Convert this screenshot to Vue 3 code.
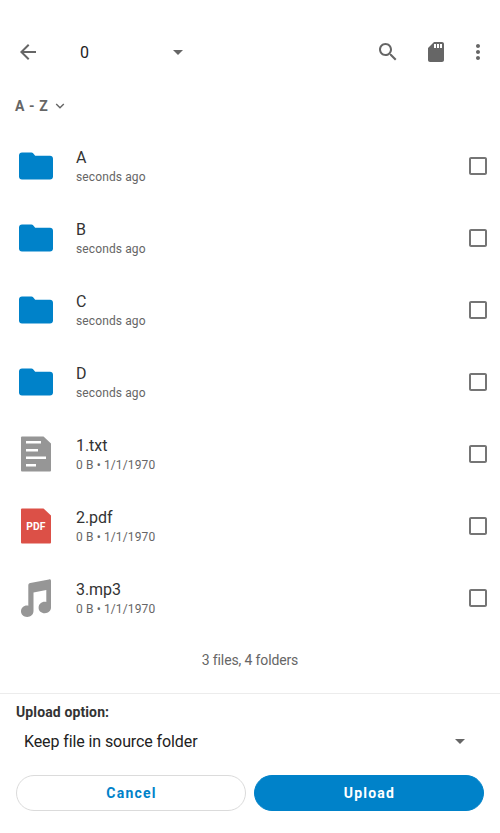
<script setup>
const items = [
  { name: 'A', meta: 'seconds ago', kind: 'folder' },
  { name: 'B', meta: 'seconds ago', kind: 'folder' },
  { name: 'C', meta: 'seconds ago', kind: 'folder' },
  { name: 'D', meta: 'seconds ago', kind: 'folder' },
  { name: '1.txt', meta: '0 B • 1/1/1970', kind: 'text' },
  { name: '2.pdf', meta: '0 B • 1/1/1970', kind: 'pdf' },
  { name: '3.mp3', meta: '0 B • 1/1/1970', kind: 'audio' },
]
</script>

<template>
  <div class="screen">
    <header class="toolbar">
      <svg class="icon" viewBox="0 0 24 24"><path d="M20 11H7.83l5.59-5.59L12 4l-8 8 8 8 1.41-1.41L7.83 13H20v-2z" /></svg>
      <div class="account">
        <span>0</span>
        <svg class="icon" viewBox="0 0 24 24"><path d="M7 10l5 5 5-5z" /></svg>
      </div>
      <div class="actions">
        <svg class="icon" viewBox="0 0 24 24"><path d="M15.5 14h-.79l-.28-.27C15.41 12.59 16 11.11 16 9.5 16 5.91 13.09 3 9.5 3S3 5.91 3 9.5 5.91 16 9.5 16c1.61 0 3.09-.59 4.23-1.57l.27.28v.79l5 4.99L20.49 19l-4.99-5zm-6 0C7.01 14 5 11.99 5 9.5S7.01 5 9.5 5 14 7.01 14 9.5 11.99 14 9.5 14z" /></svg>
        <svg class="icon" viewBox="0 0 24 24"><path d="M18 2h-8L4.02 8 4 20c0 1.1.9 2 2 2h12c1.1 0 2-.9 2-2V4c0-1.1-.9-2-2-2zm-6 6h-2V4h2v4zm3 0h-2V4h2v4zm3 0h-2V4h2v4z" /></svg>
        <svg class="icon more" viewBox="0 0 24 24"><path d="M12 8c1.1 0 2-.9 2-2s-.9-2-2-2-2 .9-2 2 .9 2 2 2zm0 2c-1.1 0-2 .9-2 2s.9 2 2 2 2-.9 2-2-.9-2-2-2zm0 6c-1.1 0-2 .9-2 2s.9 2 2 2 2-.9 2-2-.9-2-2-2z" /></svg>
      </div>
    </header>

    <div class="sort">
      <span>A - Z</span>
      <svg class="chevron" viewBox="0 0 10 6"><path d="M1.2 1L5 4.8 8.8 1" /></svg>
    </div>

    <main class="list">
      <div v-for="item in items" :key="item.name" class="row">
        <svg class="thumb" viewBox="0 0 40 40">
          <path v-if="item.kind === 'folder'" class="blue" d="M6 6.500H15.400c.8 0 1.300.3 1.700.8l2.100 2.400H34c1.800 0 3 1.200 3 3V30.500c0 1.800-1.200 3-3 3H6c-1.800 0-3-1.200-3-3V9.500c0-1.800 1.200-3 3-3z" />
          <template v-else-if="item.kind === 'text'">
            <path class="gray" d="M6 2.500H27.500L35 9.500V36.500a1 1 0 0 1-1 1H6a1 1 0 0 1-1-1V3.500a1 1 0 0 1 1-1z" />
            <path class="white" d="M10 7h15v2.500H10zM10 15h12v2.500H10zM10 22.500h20v2.500H10zM10 30h10v2.500H10z" />
          </template>
          <template v-else-if="item.kind === 'pdf'">
            <path class="red" d="M6 2.500H27.500L35 9.500V36.500a1 1 0 0 1-1 1H6a1 1 0 0 1-1-1V3.500a1 1 0 0 1 1-1z" />
            <text class="pdf" x="19.800" y="23.800">PDF</text>
          </template>
          <path v-else class="gray" d="M12.300 7.400c0-1.400.8-2 2-2.300L33 1.400c1.300-.3 2 .4 2 1.600V29.500c0 3.300-2.700 5.700-6.200 5.700-3.600 0-6.200-2.300-6.200-5.500 0-3.400 2.700-5.900 6.200-5.900.5 0 1 .1 1.500.2V12l-12.800 2.500V33c0 3.600-2.800 5.900-6.300 5.900C7.500 38.900 5 36.400 5 33.300c0-3.300 2.600-5.800 5.900-5.800.5 0 1 .1 1.400.200z" />
        </svg>
        <div class="info">
          <div class="name">{{ item.name }}</div>
          <div class="meta">{{ item.meta }}</div>
        </div>
        <svg class="icon checkbox" viewBox="0 0 24 24"><path d="M19 5v14H5V5h14m0-2H5c-1.100 0-2 .9-2 2v14c0 1.100.9 2 2 2h14c1.100 0 2-.9 2-2V5c0-1.100-.9-2-2-2z" /></svg>
      </div>
    </main>
    <div class="summary">3 files, 4 folders</div>

    <footer class="panel">
      <div class="label">Upload option:</div>
      <div class="select">
        <span>Keep file in source folder</span>
        <svg class="icon" viewBox="0 0 24 24"><path d="M7 10l5 5 5-5z" /></svg>
      </div>
      <div class="buttons">
        <button class="button cancel">Cancel</button>
        <button class="button upload">Upload</button>
      </div>
    </footer>
  </div>
</template>

<style>
body { background: #fff; }
</style>

<style scoped>
.screen {
  width: 500px;
  height: 833px;
  box-sizing: border-box;
  padding-top: 24px;
  display: flex;
  flex-direction: column;
  overflow: hidden;
  background: #fff;
  color: #333;
  font-family: Roboto, sans-serif;
}
.icon { width: 24px; height: 24px; flex: none; fill: #666; display: block; }
.checkbox { fill: #757575; }
.toolbar { height: 56px; flex: none; display: flex; align-items: center; padding: 0 10px 0 16px; }
.account {
  width: 110px;
  margin-left: 40px;
  display: flex;
  align-items: center;
  justify-content: space-between;
  font-size: 16px;
  color: #222;
}
.actions { margin-left: auto; display: flex; gap: 24px; }
.more { margin-left: -6px; }
.sort {
  height: 50px;
  flex: none;
  display: flex;
  align-items: center;
  gap: 6.4px;
  padding: 2px 0 0 15px;
  box-sizing: border-box;
  font-size: 14px;
  font-weight: 700;
  letter-spacing: 0.6px;
  color: #666;
}
.chevron { width: 10px; height: 6px; fill: none; stroke: #666; stroke-width: 1.4; }
.row { height: 72px; display: flex; align-items: center; padding: 0 10px 0 16px; }
.thumb { width: 40px; height: 40px; flex: none; }
.blue { fill: #0082c9; }
.gray { fill: #969696; }
.red { fill: #dc5047; }
.white { fill: #fff; }
.pdf { fill: #fff; font-size: 10.3px; font-weight: 700; text-anchor: middle; }
.info { flex: 1; margin-left: 20px; padding-top: 2px; }
.name { font-size: 16px; line-height: 20px; letter-spacing: -0.05px; }
.meta { font-size: 12px; line-height: 18px; letter-spacing: 0.12px; color: #666; }
.summary { height: 52px; line-height: 52px; flex: none; text-align: center; font-size: 14px; letter-spacing: -0.13px; color: #666; }
.panel { margin-top: 7px; border-top: 1px solid #ececec; padding: 9px 16px 0; }
.label { font-size: 14px; line-height: 18px; font-weight: 700; letter-spacing: 0.12px; }
.select {
  height: 40px;
  display: flex;
  align-items: center;
  justify-content: space-between;
  padding: 0 12px 0 8px;
  font-size: 16px;
  letter-spacing: -0.1px;
  color: #222;
}
.buttons { display: flex; gap: 8px; margin-top: 14px; }
.button {
  flex: 1;
  height: 36px;
  border: 1px solid #dbdbdb;
  border-radius: 18px;
  padding: 0 0 0 1px;
  background: #fff;
  color: #0082c9;
  font: 700 14px Roboto, sans-serif;
  letter-spacing: 1.2px;
}
.upload { background: #0082c9; border-color: #0082c9; color: #fff; }
</style>
